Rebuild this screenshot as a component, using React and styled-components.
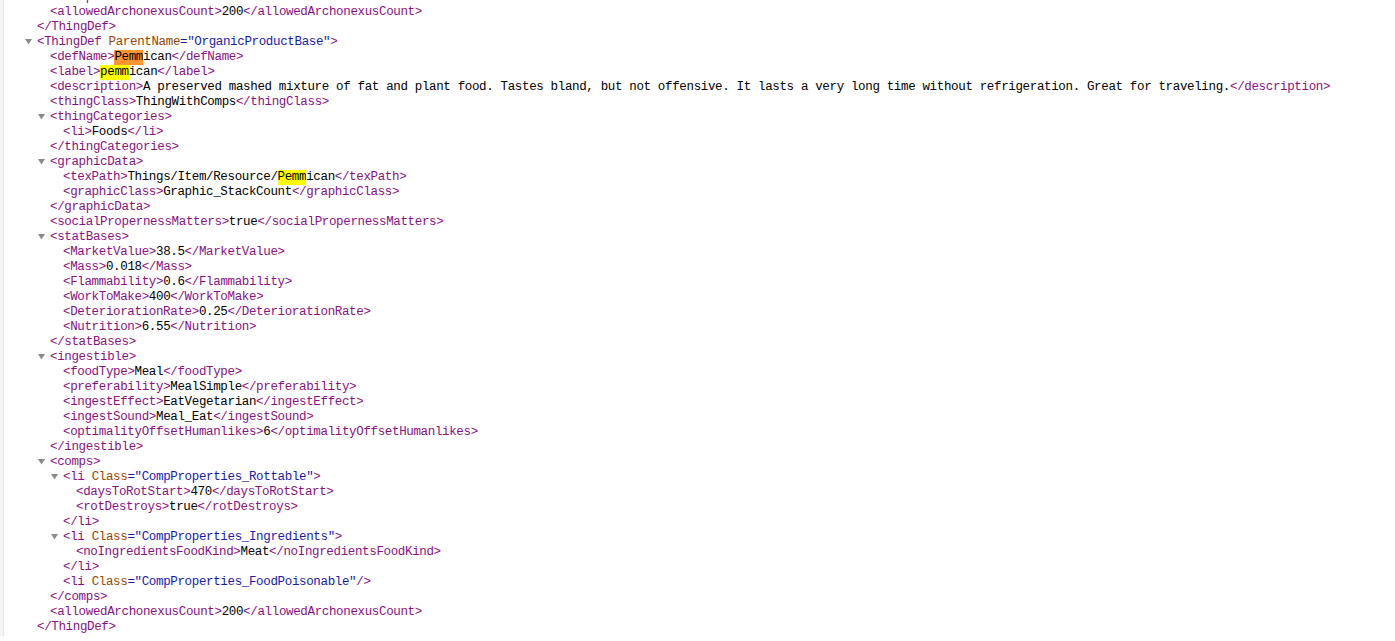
import React from 'react'
import styled, { createGlobalStyle } from 'styled-components'

const GlobalStyle = createGlobalStyle`
  html, body {
    margin: 0;
    padding: 0;
    background: #fff;
  }
  body {
    overflow: hidden;
  }
`

const Frame = styled.div`
  height: 636px;
  border-left: 3px solid #f5f5f5;
  box-shadow: inset 1px 0 0 #e4e4e4;
  overflow: hidden;
`

// scrolled xml pretty print, top is a scroll offset
const Pretty = styled.div`
  margin-top: -10px;
  padding-left: 34px;
  font-family: "Liberation Mono", "DejaVu Sans Mono", monospace;
  font-size: 12.5px;
  letter-spacing: -0.35px;
  color: #000;
`

const Line = styled.div`
  height: 15px;
  line-height: 15px;
  white-space: pre;
`

const Collapsible = styled.div`
  margin-left: 13px;
`

const Tag = styled.span`
  color: rgb(136, 18, 128);
`

const AttrName = styled.span`
  color: rgb(153, 69, 0);
`

const AttrValue = styled.span`
  color: rgb(26, 26, 166);
`

const Mark = styled.span`
  display: inline-block;
  height: 15px;
  vertical-align: top;
  background: ${(p) => (p.$current ? '#ff9632' : '#ffff00')};
`

const FoldButton = styled.span`
  display: inline-block;
  width: 10px;
  height: 15px;
  margin-left: -12px;
  margin-right: 2px;
  vertical-align: top;

  svg {
    display: block;
  }
`

function Fold() {
  return (
    <FoldButton>
      <svg width='10' height='15' viewBox='0 0 10 15'>
        <polygon points='0,4 7,4 3.5,9.5' fill='#8a8a8a' />
      </svg>
    </FoldButton>
  )
}

function Attrs({ attrs }) {
  if (!attrs) return null
  return attrs.map(([name, value]) => (
    <React.Fragment key={name}>
      <Tag> </Tag>
      <AttrName>{name}</AttrName>
      <AttrValue>="{value}"</AttrValue>
    </React.Fragment>
  ))
}

function TextRun({ text }) {
  const parts = Array.isArray(text) ? text : [text]
  return parts.map((part, i) =>
    typeof part === 'string'
      ? <React.Fragment key={i}>{part}</React.Fragment>
      : <Mark key={i} $current={part.current}>{part.mark}</Mark>
  )
}

function Element({ node }) {
  const { tag, attrs, text, children } = node
  if (children) {
    return (
      <div>
        <Line>
          <Fold />
          <Tag>&lt;{tag}</Tag><Attrs attrs={attrs} /><Tag>&gt;</Tag>
        </Line>
        <Collapsible>
          {children.map((c, i) => <Element key={i} node={c} />)}
        </Collapsible>
        <Line><Tag>&lt;/{tag}&gt;</Tag></Line>
      </div>
    )
  }
  if (text === undefined) {
    return (
      <Line>
        <Tag>&lt;{tag}</Tag><Attrs attrs={attrs} /><Tag>/&gt;</Tag>
      </Line>
    )
  }
  return (
    <Line>
      <Tag>&lt;{tag}&gt;</Tag><TextRun text={text} /><Tag>&lt;/{tag}&gt;</Tag>
    </Line>
  )
}

const leaf = (tag, text) => ({ tag, text })

const thingDef = {
  tag: 'ThingDef',
  attrs: [['ParentName', 'OrganicProductBase']],
  children: [
    leaf('defName', [{ mark: 'Pemm', current: true }, 'ican']),
    leaf('label', [{ mark: 'pemm' }, 'ican']),
    leaf('description', 'A preserved mashed mixture of fat and plant food. Tastes bland, but not offensive. It lasts a very long time without refrigeration. Great for traveling.'),
    leaf('thingClass', 'ThingWithComps'),
    { tag: 'thingCategories', children: [leaf('li', 'Foods')] },
    {
      tag: 'graphicData',
      children: [
        leaf('texPath', ['Things/Item/Resource/', { mark: 'Pemm' }, 'ican']),
        leaf('graphicClass', 'Graphic_StackCount'),
      ],
    },
    leaf('socialPropernessMatters', 'true'),
    {
      tag: 'statBases',
      children: [
        leaf('MarketValue', '38.5'),
        leaf('Mass', '0.018'),
        leaf('Flammability', '0.6'),
        leaf('WorkToMake', '400'),
        leaf('DeteriorationRate', '0.25'),
        leaf('Nutrition', '6.55'),
      ],
    },
    {
      tag: 'ingestible',
      children: [
        leaf('foodType', 'Meal'),
        leaf('preferability', 'MealSimple'),
        leaf('ingestEffect', 'EatVegetarian'),
        leaf('ingestSound', 'Meal_Eat'),
        leaf('optimalityOffsetHumanlikes', '6'),
      ],
    },
    {
      tag: 'comps',
      children: [
        {
          tag: 'li',
          attrs: [['Class', 'CompProperties_Rottable']],
          children: [leaf('daysToRotStart', '470'), leaf('rotDestroys', 'true')],
        },
        {
          tag: 'li',
          attrs: [['Class', 'CompProperties_Ingredients']],
          children: [leaf('noIngredientsFoodKind', 'Meat')],
        },
        { tag: 'li', attrs: [['Class', 'CompProperties_FoodPoisonable']] },
      ],
    },
    leaf('allowedArchonexusCount', '200'),
  ],
}

export default function App() {
  return (
    <>
      <GlobalStyle />
      <Frame>
        <Pretty>
          {/* tail of the previous ThingDef, its start is scrolled away */}
          <Collapsible>
            <Line><Tag>&lt;/comps&gt;</Tag></Line>
            <Element node={leaf('allowedArchonexusCount', '200')} />
          </Collapsible>
          <Line><Tag>&lt;/ThingDef&gt;</Tag></Line>
          <Element node={thingDef} />
        </Pretty>
      </Frame>
    </>
  )
}
